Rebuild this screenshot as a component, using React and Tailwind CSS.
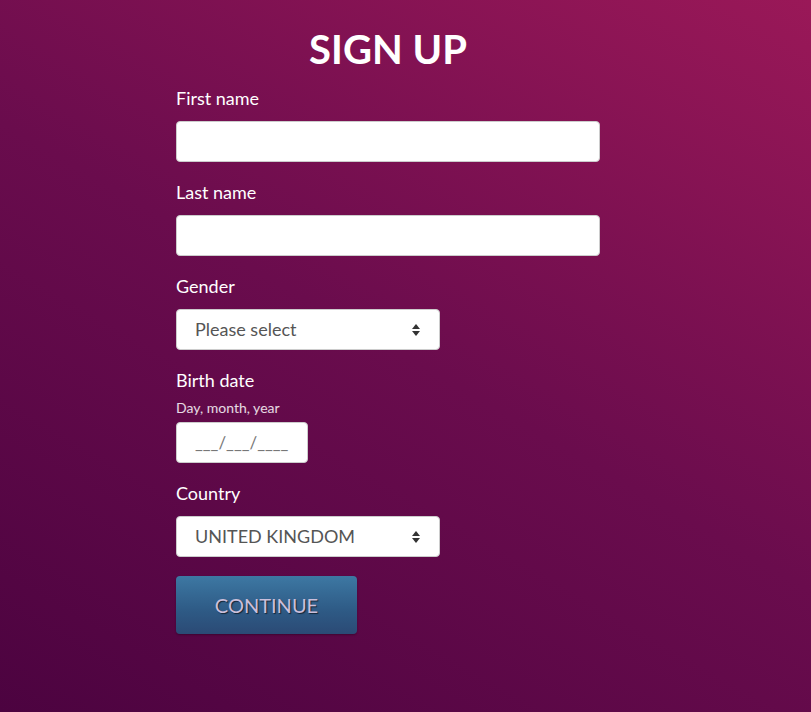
import React from 'react';

const font = { fontFamily: 'Lato, "Open Sans", sans-serif' };

const Arrows = () => (
  <svg className="pointer-events-none absolute right-5 top-1/2 -translate-y-1/2" width="8" height="12" viewBox="0 0 8 12">
    <path d="M4 0 L8 5 L0 5 Z" fill="#333" />
    <path d="M0 7 L8 7 L4 12 Z" fill="#333" />
  </svg>
);

const Field = ({ label, children, hint }) => (
  <div className="flex flex-col">
    <label className="text-[18px] leading-6 text-white">{label}</label>
    {hint && <span className="mt-[6px] text-[14px] leading-5 text-white/85">{hint}</span>}
    <div className={hint ? 'mt-[4px]' : 'mt-[11px]'}>{children}</div>
  </div>
);

const Select = ({ value, options }) => (
  <div className="relative w-[264px]">
    <select
      defaultValue={value}
      className="h-[41px] w-full appearance-none rounded-[4px] border border-[#ccc] bg-white pl-[18px] text-[18px] text-[#555] outline-none"
    >
      {options.map(o => <option key={o}>{o}</option>)}
    </select>
    <Arrows />
  </div>
);

export default function App() {
  return (
    <div
      style={font}
      className="min-h-[712px] w-full bg-[linear-gradient(30deg,#4c0340_0%,#6a0c4d_50%,#9a1858_100%)]"
    >
      <div className="ml-[176px] flex w-[424px] flex-col pt-[24px]">
        <h1 className="text-center text-[40px] font-bold leading-[50px] text-white">SIGN UP</h1>
        <div className="mt-[12px] flex flex-col gap-[18px]">
          <Field label="First name">
            <input className="h-[41px] w-full rounded-[4px] border border-[#ccc] bg-white px-3 outline-none" />
          </Field>
          <Field label="Last name">
            <input className="h-[41px] w-full rounded-[4px] border border-[#ccc] bg-white px-3 outline-none" />
          </Field>
          <Field label="Gender">
            <Select value="Please select" options={['Please select', 'Male', 'Female']} />
          </Field>
          <Field label="Birth date" hint="Day, month, year">
            <input
              placeholder="___/___/____"
              className="h-[41px] w-[132px] rounded-[4px] border border-[#ccc] bg-white px-[18px] text-[17px] text-[#555] outline-none placeholder:text-[#777]"
            />
          </Field>
          <Field label="Country">
            <Select value="UNITED KINGDOM" options={['UNITED KINGDOM', 'FRANCE', 'GERMANY']} />
          </Field>
          <div>
            <button className="mt-px h-[58px] w-[181px] rounded-[4px] bg-[linear-gradient(180deg,#3d78a3_0%,#2e5a85_60%,#2b4a75_100%)] text-[20px] text-[#cbbfdb] [text-shadow:1px_1px_1px_rgba(0,0,0,0.6)] shadow-[0_1px_2px_rgba(0,0,0,0.3)]">
              CONTINUE
            </button>
          </div>
        </div>
      </div>
    </div>
  );
}
